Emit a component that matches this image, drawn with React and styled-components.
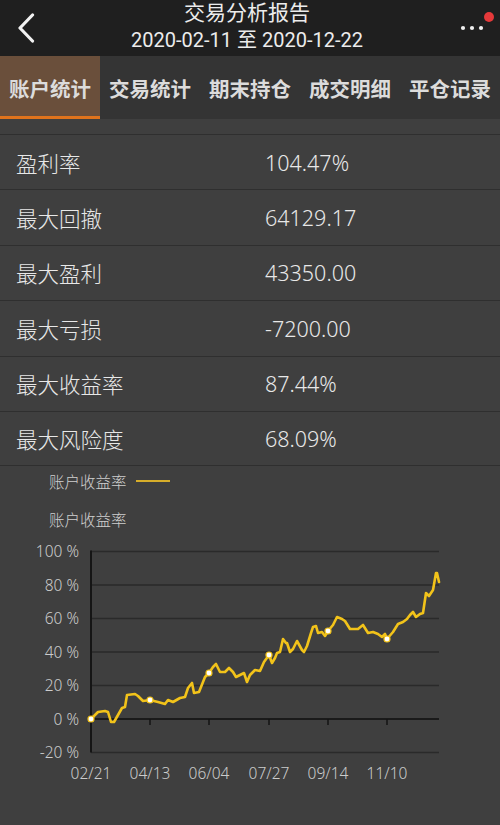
import React from 'react';
import styled, { createGlobalStyle } from 'styled-components';

const GlobalStyle = createGlobalStyle`
  html, body {
    margin: 0;
    padding: 0;
    background: #3f3f3f;
  }
  body {
    font-family: "Noto Sans", "Noto Sans CJK SC", sans-serif;
  }
`;

const Page = styled.div`
  width: 500px;
  height: 825px;
  overflow: hidden;
  background: #3f3f3f;
  color: #e6e6e6;
`;

const Header = styled.header`
  height: 56px;
  background: #1f1f1f;
  display: flex;
  align-items: center;
  justify-content: space-between;
  padding: 0 10px 0 12px;
`;

const HeaderTitle = styled.div`
  flex: 1;
  display: flex;
  flex-direction: column;
  align-items: center;
  color: #ececec;
  font-family: Roboto, "Noto Sans CJK SC", sans-serif;
`;

const TitleMain = styled.div`
  font-size: 21px;
  line-height: 26px;
  margin-top: -2px;
`;

const TitleSub = styled.div`
  font-size: 20px;
  line-height: 28px;
`;

const IconButton = styled.div`
  width: ${p => p.$w || 30}px;
  height: 56px;
  display: flex;
  align-items: center;
  justify-content: center;
  position: relative;
`;

const RedDot = styled.span`
  position: absolute;
  top: 12px;
  right: -4px;
  width: 10px;
  height: 10px;
  border-radius: 50%;
  background: #e5393a;
`;

const TabBar = styled.nav`
  display: flex;
  height: 63px;
  background: #343434;
`;

const Tab = styled.div`
  width: 100px;
  box-sizing: border-box;
  display: flex;
  align-items: center;
  justify-content: center;
  font-size: 20.5px;
  font-weight: 700;
  color: #dcdcdc;
  background: ${p => (p.$active ? '#6a4f3b' : 'transparent')};
  border-bottom: 3px solid ${p => (p.$active ? '#e0731c' : 'transparent')};
  padding-top: 3px;
`;

const StatList = styled.section`
  padding-top: 15px;
`;

const StatRow = styled.div`
  height: 55.4px;
  box-sizing: border-box;
  border-top: 1.5px solid #2f2f2f;
  display: flex;
  align-items: center;
  font-size: 21.5px;
  font-weight: 300;
  color: #e8e8e8;
  &:last-child {
    border-bottom: 1.5px solid #2f2f2f;
  }
`;

const StatLabel = styled.div`
  width: 249px;
  padding-left: 16px;
`;

const StatValue = styled.div`
  flex: 1;
`;

const ChartSection = styled.section`
  padding-top: 4px;
`;

const Legend = styled.div`
  display: flex;
  align-items: center;
  padding-left: 49px;
  height: 22px;
  font-size: 15.5px;
  font-weight: 300;
  color: #cfcfcf;
`;

const LegendLine = styled.span`
  display: inline-block;
  width: 34px;
  height: 2px;
  margin-left: 9px;
  background: #d6ad2a;
`;

const ChartTitle = styled.div`
  padding-left: 49px;
  margin-top: 17px;
  height: 22px;
  line-height: 22px;
  font-size: 15.5px;
  font-weight: 300;
  color: #cfcfcf;
`;

const ChartSvg = styled.svg`
  display: block;
`;

const stats = [
  ['盈利率', '104.47%'],
  ['最大回撤', '64129.17'],
  ['最大盈利', '43350.00'],
  ['最大亏损', '-7200.00'],
  ['最大收益率', '87.44%'],
  ['最大风险度', '68.09%'],
];

const tabs = ['账户统计', '交易统计', '期末持仓', '成交明细', '平仓记录'];

const pts = [
  [91, 719], [98, 712], [105, 711], [108, 712], [111, 722], [114, 722], [122, 708], [125, 707],
  [127, 695], [135, 694], [138, 696], [143, 701], [150, 700], [158, 702], [165, 704], [168, 700],
  [173, 702], [180, 698], [185, 697], [188, 688], [192, 683], [194, 693], [199, 692], [203, 682],
  [205, 677], [209, 673], [213, 667], [216, 664], [220, 672], [225, 672], [229, 668], [233, 672],
  [236, 677], [242, 674], [244, 673], [247, 682], [250, 675], [255, 670], [260, 671], [264, 662],
  [269, 655], [272, 663], [275, 658], [277, 653], [280, 652], [283, 639], [286, 643], [287, 643],
  [290, 652], [293, 649], [297, 641], [302, 650], [304, 652], [307, 646], [311, 633], [313, 627],
  [316, 626], [318, 633], [322, 632], [325, 636], [328, 631], [333, 625], [337, 617], [342, 619],
  [345, 621], [350, 629], [355, 629], [358, 629], [363, 625], [368, 633], [373, 632], [378, 634],
  [382, 637], [385, 634], [387, 639], [393, 632], [398, 624], [403, 622], [407, 619], [410, 615],
  [413, 612], [416, 617], [420, 614], [423, 613], [426, 593], [429, 596], [433, 590], [436, 573],
  [437, 573], [439, 582],
];

const markers = [[91, 719], [150, 700], [209, 673], [269, 655], [328, 631], [387, 639]];

const yTicks = [100, 80, 60, 40, 20, 0, -20];
const yOf = v => 719 - v * 1.675;
const xTicks = [
  ['02/21', 91], ['04/13', 150], ['06/04', 209], ['07/27', 269], ['09/14', 328], ['11/10', 387],
];

const Chart = () => (
  <ChartSvg width="500" height="294" viewBox="0 531 500 294">
    {yTicks.map(v => (
      <g key={v}>
        <line
          x1="91" x2="439" y1={yOf(v)} y2={yOf(v)}
          stroke={v === 0 ? '#1a1a1a' : '#2a2a2a'}
          strokeWidth={v === 0 ? 2 : 1.5}
        />
        <text
          x="79" y={yOf(v) + 5.5} textAnchor="end"
          fill="#cccccc" fontSize="15.5" fontWeight="300" fontFamily='"Noto Sans", sans-serif'
        >
          {`${v} %`}
        </text>
      </g>
    ))}
    <line x1="91" x2="91" y1={yOf(100) - 1} y2={yOf(-20)} stroke="#151515" strokeWidth="2" />
    {xTicks.map(([label, x]) => (
      <g key={label}>
        {x > 91 && <line x1={x} x2={x} y1="719" y2="725" stroke="#151515" strokeWidth="1.5" />}
        <text
          x={x} y="779" textAnchor="middle"
          fill="#cccccc" fontSize="15.5" fontWeight="300" fontFamily='"Noto Sans", sans-serif'
        >
          {label}
        </text>
      </g>
    ))}
    <polyline
      points={pts.map(p => p.join(',')).join(' ')}
      fill="none" stroke="#f2c31a" strokeWidth="2.6" strokeLinejoin="round" strokeLinecap="round"
    />
    {markers.map(([x, y]) => (
      <circle key={x} cx={x} cy={y} r="3" fill="#ffffff" stroke="#f2c31a" strokeWidth="1.2" />
    ))}
  </ChartSvg>
);

export default function App() {
  return (
    <Page>
      <GlobalStyle />
      <Header>
        <IconButton $w={28}>
          <svg width="18" height="30" viewBox="0 0 18 30">
            <polyline points="15.5,2 3,15 15.5,28" fill="none" stroke="#f2f2f2" strokeWidth="3.2" strokeLinecap="round" strokeLinejoin="round" />
          </svg>
        </IconButton>
        <HeaderTitle>
          <TitleMain>交易分析报告</TitleMain>
          <TitleSub>2020-02-11 至 2020-12-22</TitleSub>
        </HeaderTitle>
        <IconButton $w={36}>
          <svg width="24" height="6" viewBox="0 0 24 6">
            <circle cx="3" cy="3" r="2.1" fill="#f0f0f0" />
            <circle cx="12" cy="3" r="2.1" fill="#f0f0f0" />
            <circle cx="21" cy="3" r="2.1" fill="#f0f0f0" />
          </svg>
          <RedDot />
        </IconButton>
      </Header>
      <TabBar>
        {tabs.map((t, i) => (
          <Tab key={t} $active={i === 0}>{t}</Tab>
        ))}
      </TabBar>
      <StatList>
        {stats.map(([label, value]) => (
          <StatRow key={label}>
            <StatLabel>{label}</StatLabel>
            <StatValue>{value}</StatValue>
          </StatRow>
        ))}
      </StatList>
      <ChartSection>
        <Legend>
          账户收益率
          <LegendLine />
        </Legend>
        <ChartTitle>账户收益率</ChartTitle>
        <Chart />
      </ChartSection>
    </Page>
  );
}
